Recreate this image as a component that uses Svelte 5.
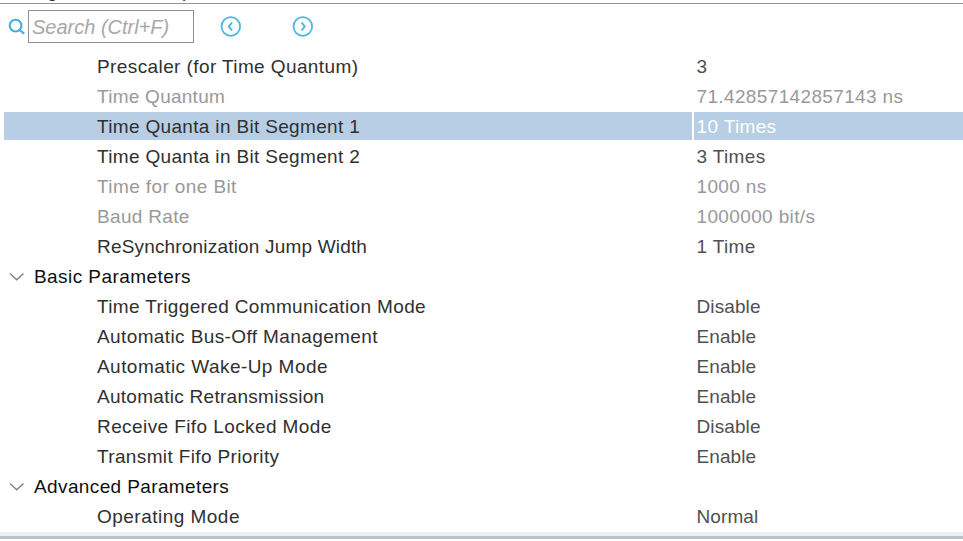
<script>
  const rows = [
    { label: 'Prescaler (for Time Quantum)', value: '3', track: 0.4 },
    { label: 'Time Quantum', value: '71.42857142857143 ns', readonly: true, track: 0.26 },
    { label: 'Time Quanta in Bit Segment 1', value: '10 Times', selected: true, track: 0.33 },
    { label: 'Time Quanta in Bit Segment 2', value: '3 Times', track: 0.33 },
    { label: 'Time for one Bit', value: '1000 ns', readonly: true, track: 0.4 },
    { label: 'Baud Rate', value: '1000000 bit/s', readonly: true, track: 0.32 },
    { label: 'ReSynchronization Jump Width', value: '1 Time', track: 0.18 },
    { label: 'Basic Parameters', group: true, track: 0.43 },
    { label: 'Time Triggered Communication Mode', value: 'Disable', track: 0.36 },
    { label: 'Automatic Bus-Off Management', value: 'Enable', track: 0.39 },
    { label: 'Automatic Wake-Up Mode', value: 'Enable', track: 0.45 },
    { label: 'Automatic Retransmission', value: 'Enable', track: 0.28 },
    { label: 'Receive Fifo Locked Mode', value: 'Disable', track: 0.41 },
    { label: 'Transmit Fifo Priority', value: 'Enable', track: 0.36 },
    { label: 'Advanced Parameters', group: true, track: 0.38 },
    { label: 'Operating Mode', value: 'Normal', track: 0.48 }
  ];
</script>

<div class="panel">
  <div class="caption"><span>Configure the below parameters :</span></div>
  <div class="toolbar">
    <svg class="lens" width="18" height="20" viewBox="0 0 18 20" fill="none">
      <circle cx="7.6" cy="8.6" r="5.9" stroke="#3fb0dc" stroke-width="2.1" />
      <path d="M11.5 13L16.2 16.7" stroke="#3fb0dc" stroke-width="2.2" />
    </svg>
    <input type="text" placeholder="Search (Ctrl+F)" aria-label="Search" />
    <button class="prev" aria-label="Previous">
      <svg width="22" height="22" viewBox="0 0 22 22" fill="none" stroke="#4ab7e2">
        <circle cx="10.8" cy="10.5" r="9.3" stroke-width="1.8" />
        <path d="M12 6.5L8.9 10.5L12 14.5" stroke-width="2" />
      </svg>
    </button>
    <button class="next" aria-label="Next">
      <svg width="22" height="22" viewBox="0 0 22 22" fill="none" stroke="#4ab7e2">
        <circle cx="10.8" cy="10.5" r="9.3" stroke-width="1.8" />
        <path d="M9.6 6.5L12.7 10.5L9.6 14.5" stroke-width="2" />
      </svg>
    </button>
  </div>
  <div class="rows">
    {#each rows as row}
      <div class="row" class:group={row.group} class:readonly={row.readonly} class:selected={row.selected}>
        <div class="label">
          {#if row.group}
            <svg width="16" height="10" viewBox="0 0 16 10" fill="none">
              <path d="M1 1.5L7.7 7.8L14.5 1.5" stroke="#858585" stroke-width="1.5" />
            </svg>
          {/if}
          <span style:letter-spacing="{row.track}px">{row.label}</span>
        </div>
        {#if !row.group}
          <div class="value" class:numeric={/\d/.test(row.value)}>{row.value}</div>
        {/if}
      </div>
    {/each}
  </div>
  <div class="divider"></div>
</div>

<style>
  :global(body) {
    background: #fff;
    overflow: hidden;
  }
  .panel {
    width: 963px;
    height: 541px;
    box-sizing: border-box;
    overflow: hidden;
    background: #fff;
    display: flex;
    flex-direction: column;
    font-family: "Liberation Sans", Arial, sans-serif;
    font-size: 19px;
    color: #303030;
    white-space: nowrap;
  }
  .caption {
    height: 3px;
    flex: none;
    overflow: hidden;
    border-bottom: 1px solid #8e9197;
    display: flex;
    align-items: flex-end;
    padding-left: 1px;
    font-size: 18.67px;
    letter-spacing: 0.5px;
  }
  .caption span {
    line-height: 20px;
    padding-bottom: 2px;
  }
  .toolbar {
    height: 47px;
    flex: none;
    display: flex;
    align-items: flex-start;
    padding: 6px 0 0 8px;
    box-sizing: border-box;
  }
  .lens {
    margin: 7px 2px 0 0;
  }
  input {
    width: 166px;
    height: 33px;
    box-sizing: border-box;
    border: 1px solid #8b8f96;
    border-radius: 0;
    padding: 1px 3px 0;
    margin: 0;
    outline: none;
    background: #fff;
    font: italic 20px "Liberation Sans", Arial, sans-serif;
    letter-spacing: 0;
  }
  input::placeholder {
    color: #a8a8a8;
    opacity: 1;
  }
  button {
    border: 0;
    padding: 0;
    background: none;
    width: 22px;
    height: 22px;
  }
  button svg {
    display: block;
  }
  .prev {
    margin: 6px 0 0 26px;
  }
  .next {
    margin: 6px 0 0 50px;
  }
  .rows {
    flex: none;
    padding-left: 4px;
  }
  .row {
    height: 30px;
    display: flex;
    line-height: 30px;
    gap: 2px;
    align-items: center;
  }
  .label {
    width: 688px;
    height: 28px;
    padding-left: 93px;
    box-sizing: border-box;
  }
  .value {
    flex: 1;
    height: 28px;
    padding-left: 2.5px;
    color: #505050;
    letter-spacing: 0.1px;
  }
  .value.numeric {
    letter-spacing: 0.36px;
  }
  .readonly .label,
  .readonly .value {
    color: #999;
  }
  .selected .label,
  .selected .value {
    background: #b8cee5;
  }
  .selected .value {
    color: #fff;
  }
  .group {
    color: #101010;
  }
  .group .label {
    display: flex;
    align-items: center;
    height: 30px;
    padding: 2px 0 0 5px;
    gap: 9px;
  }
  .divider {
    height: 3px;
    flex: none;
    margin-top: 1px;
    border-top: 4px solid #edf0f1;
    background: #b7c4c9;
  }
</style>
